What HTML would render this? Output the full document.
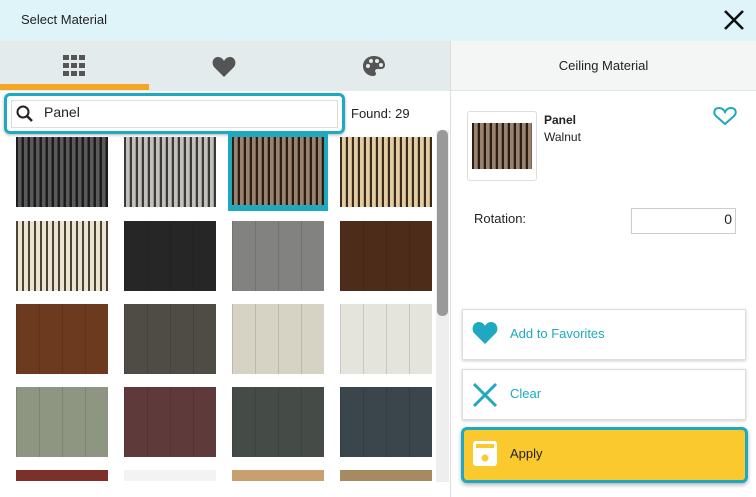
<!DOCTYPE html>
<html><head><style>
*{margin:0;padding:0;box-sizing:border-box}
body{width:756px;height:497px;overflow:hidden;background:#fff;font-family:"Liberation Sans",sans-serif;position:relative;font-size:13px;color:#222}
.a{position:absolute}
.t{position:absolute;width:92px;height:70px}
.s1{background:repeating-linear-gradient(90deg,#1c1c1c 0 2px,#5a5a5a 2px 5px,#3c3c3c 5px 6px)}
.s2{background:repeating-linear-gradient(90deg,#3a3a3a 0 2px,#c2c0bb 2px 5px,#9e9c98 5px 6px)}
.s3{background:repeating-linear-gradient(90deg,#2a1d14 0 2px,#9a8270 2px 5px,#7a6452 5px 6px)}
.s4{background:repeating-linear-gradient(90deg,#3a2c1c 0 2px,#e2cca4 2px 5px,#c6ad84 5px 6px)}
.s5{background:repeating-linear-gradient(90deg,#4a4436 0 2px,#ece4d0 2px 6px)}
.p{background-image:repeating-linear-gradient(90deg,rgba(0,0,0,.12) 0 1px,transparent 1px 23px)}
</style></head><body>
<div class="a" style="left:0;top:0;width:756px;height:41px;background:#dff4f9"></div>
<div class="a" style="left:21px;top:12px;font-size:13px">Select Material</div>
<svg class="a" style="left:723px;top:9px" width="22" height="22" viewBox="0 0 22 22"><path d="M2 2L20 20M20 2L2 20" stroke="#111" stroke-width="2.6"/></svg>
<div class="a" style="left:0;top:41px;width:450px;height:50px;background:#e3ebed"></div>
<div class="a" style="left:0;top:84px;width:149px;height:6px;background:#f5a623"></div>
<svg class="a" style="left:63px;top:55px" width="22" height="22" viewBox="0 0 22 22" fill="#555"><rect x="0" y="0" width="6" height="5"/><rect x="8" y="0" width="6" height="5"/><rect x="16" y="0" width="6" height="5"/><rect x="0" y="8" width="6" height="5"/><rect x="8" y="8" width="6" height="5"/><rect x="16" y="8" width="6" height="5"/><rect x="0" y="16" width="6" height="5"/><rect x="8" y="16" width="6" height="5"/><rect x="16" y="16" width="6" height="5"/></svg>
<svg class="a" style="left:212px;top:56px" width="24" height="21" viewBox="0 0 24 21"><path d="M12 21L2 11C-1 7 1 1 6 1c3 0 5 2 6 4 1-2 3-4 6-4 5 0 7 6 4 10z" fill="#555"/></svg>
<svg class="a" style="left:362px;top:55px" width="24" height="22" viewBox="0 0 24 22"><path d="M12 1C5 1 1 6 1 11c0 6 5 10 10 10 2 0 3-1 3-2.5 0-1-1-1.5-1-2.5 0-1 1-2 2.5-2H19c3 0 4-2 4-4C23 5 18 1 12 1z" fill="#555"/><circle cx="6" cy="11" r="2" fill="#e3ebed"/><circle cx="9" cy="6" r="2" fill="#e3ebed"/><circle cx="15" cy="6" r="2" fill="#e3ebed"/><circle cx="19" cy="10" r="2" fill="#e3ebed"/></svg>
<div class="a" style="left:4px;top:93px;width:341px;height:41px;border:3px solid #1ea9c0;border-radius:6px;box-shadow:0 1px 3px rgba(0,0,0,.3)"></div>
<div class="a" style="left:11px;top:100px;width:327px;height:28px;border:1px solid #ddd;background:#fff"></div>
<svg class="a" style="left:16px;top:105px" width="18" height="18" viewBox="0 0 18 18"><circle cx="7" cy="7" r="5.5" stroke="#222" stroke-width="2" fill="none"/><path d="M11 11L16 16" stroke="#222" stroke-width="2.4"/></svg>
<div class="a" style="left:44px;top:104px;font-size:14px">Panel</div>
<div class="a" style="left:351px;top:106px;font-size:13px">Found: 29</div>
<div class="a" style="left:228px;top:134px;width:100px;height:77px;background:#1ea9c0"></div>
<div class="t s1" style="left:16px;top:137px"></div>
<div class="t s2" style="left:124px;top:137px"></div>
<div class="t s3" style="left:232px;top:137px;height:68px"></div>
<div class="t s4" style="left:340px;top:137px"></div>
<div class="t s5" style="left:16px;top:221px"></div>
<div class="t p" style="left:124px;top:221px;background-color:#262626"></div>
<div class="t p" style="left:232px;top:221px;background-color:#828280"></div>
<div class="t p" style="left:340px;top:221px;background-color:#4e2c1a"></div>
<div class="t p" style="left:16px;top:304px;background-color:#6c3a1e"></div>
<div class="t p" style="left:124px;top:304px;background-color:#4f4b45"></div>
<div class="t p" style="left:232px;top:304px;background-color:#d6d2c4"></div>
<div class="t p" style="left:340px;top:304px;background-color:#e4e3dc"></div>
<div class="t p" style="left:16px;top:387px;background-color:#8e9682"></div>
<div class="t p" style="left:124px;top:387px;background-color:#5e3a3a"></div>
<div class="t p" style="left:232px;top:387px;background-color:#454b46"></div>
<div class="t p" style="left:340px;top:387px;background-color:#3a454c"></div>
<div class="t" style="left:16px;top:470px;height:11px;background:#7c302a"></div>
<div class="t" style="left:124px;top:470px;height:11px;background:#f2f3f2"></div>
<div class="t" style="left:232px;top:470px;height:11px;background:#c8a070"></div>
<div class="t" style="left:340px;top:470px;height:11px;background:#a88a62"></div>
<div class="a" style="left:436px;top:130px;width:13px;height:352px;background:#eee"></div>
<div class="a" style="left:437px;top:130px;width:11px;height:186px;background:#999;border-radius:5px"></div>
<div class="a" style="left:450px;top:41px;width:1px;height:456px;background:#ddd"></div>
<div class="a" style="left:451px;top:41px;width:305px;height:50px;background:#f4f5f5;border-bottom:1px solid #e2e2e2"></div>
<div class="a" style="left:451px;top:58px;width:305px;text-align:center;font-size:13px">Ceiling Material</div>
<div class="a" style="left:467px;top:111px;width:70px;height:70px;border:1px solid #ddd;border-radius:3px"></div>
<div class="a s3" style="left:472px;top:123px;width:60px;height:46px"></div>
<div class="a" style="left:544px;top:113px;font-size:12px;font-weight:bold">Panel</div>
<div class="a" style="left:544px;top:130px;font-size:12px">Walnut</div>
<svg class="a" style="left:713px;top:106px" width="24" height="20" viewBox="0 0 24 20"><path d="M12 18L3 10C0 7 1 2 6 2c3 0 5 2 6 4 1-2 3-4 6-4 5 0 6 5 3 8z" stroke="#1ea9c0" stroke-width="2" fill="none"/></svg>
<div class="a" style="left:474px;top:211px;font-size:13px">Rotation:</div>
<div class="a" style="left:631px;top:208px;width:105px;height:26px;border:1px solid #ccc"></div>
<div class="a" style="left:631px;top:211px;width:101px;text-align:right;font-size:14px">0</div>
<div class="a" style="left:462px;top:309px;width:284px;height:51px;border:1px solid #ddd;box-shadow:0 1px 3px rgba(0,0,0,.2);background:#fff"></div>
<svg class="a" style="left:472px;top:321px" width="26" height="24" viewBox="0 0 26 24"><path d="M13 23L2 12C-1 8 1 1 7 1c3 0 5 2 6 4 1-2 3-4 6-4 6 0 8 7 5 11z" fill="#1ea9c0"/></svg>
<div class="a" style="left:510px;top:326px;color:#1ea9c0;font-size:13px">Add to Favorites</div>
<div class="a" style="left:462px;top:369px;width:284px;height:51px;border:1px solid #ddd;box-shadow:0 1px 3px rgba(0,0,0,.2);background:#fff"></div>
<svg class="a" style="left:472px;top:382px" width="26" height="26" viewBox="0 0 26 26"><path d="M2 2L24 24M24 2L2 24" stroke="#1ea9c0" stroke-width="3"/></svg>
<div class="a" style="left:510px;top:386px;color:#1ea9c0;font-size:13px">Clear</div>
<div class="a" style="left:461px;top:427px;width:287px;height:56px;border:3px solid #1ea9c0;border-radius:6px;background:#fac92e;box-shadow:0 2px 4px rgba(0,0,0,.3)"></div>
<svg class="a" style="left:473px;top:441px" width="24" height="25" viewBox="0 0 24 25"><rect x="0" y="0" width="24" height="25" rx="3" fill="#fff"/><rect x="3" y="3" width="18" height="4" fill="#fac92e"/><circle cx="12" cy="17" r="3.5" fill="#fac92e"/></svg>
<div class="a" style="left:510px;top:446px;font-size:13px">Apply</div>
</body></html>
